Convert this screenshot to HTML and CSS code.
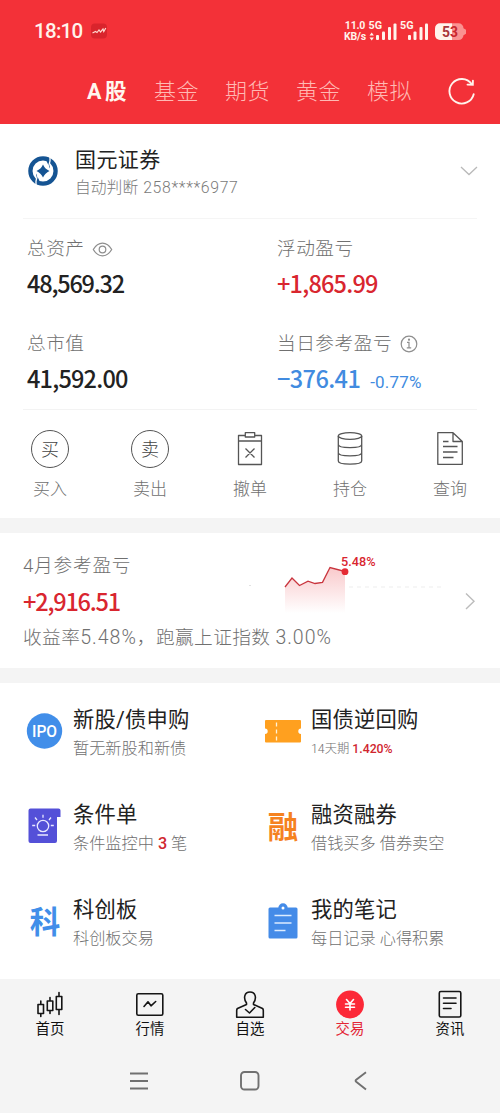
FILE: index.html
```html
<!DOCTYPE html>
<html lang="zh-CN">
<head>
<meta charset="utf-8">
<title>交易</title>
<link rel="stylesheet" href="styles.css">
</head>
<body>
<header class="header">
  <div class="status">
    <span class="clock">18:10</span>
    <svg class="app-dot" viewBox="90 22 18 18"><rect x="91" y="23.500" width="16" height="15" rx="4" fill="#d9242c"/><path d="M92.500 33l3-1.500 1.500 1 2-2.500 1.500 2 2.500-3 .8 2.500 2-3.500" fill="none" stroke="#ffd9d0" stroke-width="1.200"/></svg>
    <div class="net"><span>11.0</span><span>KB/s</span></div>
    <svg class="signals" viewBox="368 18 100 24">
      <g fill="#fff3ec">
        <path d="M371.700 31.500l2.200 3h-4.400zM371.700 39.500l2.200-3h-4.400z"/>
        <rect x="376" y="34" width="3" height="5" rx="1"/><rect x="382" y="30.500" width="3" height="8.500" rx="1"/><rect x="388" y="26" width="3" height="13" rx="1"/><rect x="393.500" y="22.500" width="3" height="16.500" rx="1"/>
        <rect x="408" y="34" width="3" height="5" rx="1"/><rect x="413.500" y="30.500" width="3" height="8.500" rx="1"/><rect x="419.500" y="26" width="3" height="13" rx="1"/><rect x="425" y="22.500" width="3" height="16.500" rx="1"/>
        <text class="gen" x="368.500" y="27.800" textLength="13.500" lengthAdjust="spacingAndGlyphs">5G</text>
        <text class="gen" x="400" y="27.800" textLength="13.500" lengthAdjust="spacingAndGlyphs">5G</text>
        <path d="M440 22.300h12v16.700h-12a5 5 0 0 1-5-5v-6.700a5 5 0 0 1 5-5z"/>
      </g>
      <path d="M452 22.300h6.500a5 5 0 0 1 5 5l2.500 1.500v4l-2.500 1.500a5 5 0 0 1-5 4.700h-6.500z" fill="#fa9291"/>
      <text class="batt" x="442" y="36" textLength="16" lengthAdjust="spacingAndGlyphs"><tspan fill="#a8353a">5</tspan><tspan fill="#c9262e">3</tspan></text>
    </svg>
  </div>
  <nav class="markets">
    <span class="market on">A股</span><span class="market">基金</span><span class="market">期货</span><span class="market">黄金</span><span class="market">模拟</span>
    <svg class="refresh" viewBox="446 76 30 30" fill="none" stroke="#fff3ec" stroke-width="1.900" stroke-linecap="round"><path d="M473.700 94.200a12.300 12.300 0 1 1-2-10.200"/><path d="M467.500 84.600l5.300.2.100-4"/></svg>
  </nav>
</header>

<section class="account">
  <svg class="broker-logo" viewBox="28 155 30 31">
    <circle cx="43" cy="171" r="12.600" fill="none" stroke="#155493" stroke-width="4.300"/>
    <path d="M46.500 161l3.500-2.500v10zM39.500 181l-3.500 2.500v-10z" fill="#155493"/>
    <path d="M50 155.500v5.500l-1.500 6M36 186.500v-5.500l1.500-6" fill="none" stroke="#fff" stroke-width="1.300"/>
    <path d="M43 164.500q2 4.500 6.500 6.500q-4.500 2-6.500 6.500q-2-4.500-6.500-6.500q4.500-2 6.500-6.500z" fill="#155493"/>
  </svg>
  <div class="broker">
    <div class="broker-name">国元证券</div>
    <div class="broker-no"><span>自动判断</span><span class="acct">258****6977</span></div>
  </div>
  <svg class="down" viewBox="459 163 20 16" fill="none" stroke="#b9b9b9" stroke-width="1.300"><path d="M461 167l8 7.500 8-7.500"/></svg>
</section>

<section class="stats">
  <div class="stat">
    <div class="label">总资产<svg class="eye" viewBox="91 240 21 18" fill="none" stroke="#8e8e8e" stroke-width="1.200"><path d="M92.300 249.500q3.700-6.300 9.200-6.300t9.200 6.300q-3.700 6.300-9.200 6.300t-9.200-6.300z"/><circle cx="101.500" cy="249.500" r="3.300"/></svg></div>
    <div class="value tight">48,569.32</div>
  </div>
  <div class="stat">
    <div class="label">浮动盈亏</div>
    <div class="value up">+1,865.99</div>
  </div>
  <div class="stat">
    <div class="label">总市值</div>
    <div class="value">41,592.00</div>
  </div>
  <div class="stat">
    <div class="label">当日参考盈亏<svg class="info" viewBox="400 334 20 20" fill="none" stroke="#8e8e8e" stroke-width="1.200"><circle cx="410" cy="344" r="7.800"/><path d="M408 342.300h2v5.500m-2.200 0h4.400"/><circle cx="410" cy="339.700" r=".5" fill="#8e8e8e"/></svg></div>
    <div class="value down-c">−376.41<span class="pct">-0.77%</span></div>
  </div>
</section>

<section class="actions">
  <div class="action"><div class="ring">买</div><span>买入</span></div>
  <div class="action"><div class="ring">卖</div><span>卖出</span></div>
  <div class="action"><svg class="act-ico" viewBox="230 429 40 40"><path d="M245 435.500h-6.500v29h23v-29H255M238.500 441h23M245.300 432.700h9.400v4.300h-9.400zM245.500 448.500l9 9m0-9l-9 9"/></svg><span>撤单</span></div>
  <div class="action"><svg class="act-ico" viewBox="330 429 40 40"><ellipse cx="350" cy="436" rx="11.700" ry="3.300"/><path d="M338.300 436v25c0 4.200 23.400 4.200 23.400 0v-25M338.300 444.500c0 4.200 23.400 4.200 23.400 0M338.300 452.700c0 4.200 23.400 4.200 23.400 0"/></svg><span>持仓</span></div>
  <div class="action"><svg class="act-ico" viewBox="430 429 40 40"><path d="M453 432.700h-15.200v31.600h24.500V441.500zM453 432.700v8.800h9.300M443 441.500h5.500M443 446.500h14.500M443 452h14.500M443 457.500h10.500"/></svg><span>查询</span></div>
</section>

<section class="month">
  <div class="month-text">
    <div class="label">4月参考盈亏</div>
    <div class="value up tight">+2,916.51</div>
    <div class="summary">收益率<span class="num">5.48%</span>，跑赢上证指数 <span class="num">3.00%</span></div>
  </div>
  <svg class="spark" viewBox="245 545 205 75">
    <defs><linearGradient id="fade" x1="0" y1="0" x2="0" y2="1"><stop offset="0" stop-color="#f9c9cb"/><stop offset="1" stop-color="#fff"/></linearGradient></defs>
    <path d="M285 587L292 578L299.500 585.500L308 581.200L315 583.500L322.500 582.300L330 567.500L345 571.500V613H285z" fill="url(#fade)"/>
    <path d="M285 587L292 578L299.500 585.500L308 581.200L315 583.500L322.500 582.300L330 567.500L345 571.500" fill="none" stroke="#c9353e" stroke-width="1.300"/>
    <path d="M349 587H445" stroke="#ededed" stroke-dasharray="4 4"/>
    <path d="M249 585.500h2" stroke="#e2e2e2"/>
    <circle cx="345" cy="571.700" r="3.400" fill="#e52a33"/>
    <text class="spark-pct" x="341" y="566.300" textLength="34.500" lengthAdjust="spacingAndGlyphs">5.48%</text>
  </svg>
  <svg class="next" viewBox="462 590 16 22" fill="none" stroke="#bcbcbc" stroke-width="1.400"><path d="M466 593.500l8 7.700-8 7.700"/></svg>
</section>

<section class="services">
  <div class="service">
    <svg class="svc-ico" viewBox="26 712 38 38"><circle cx="44.500" cy="731" r="17.700" fill="#418ee9"/><text class="ipo" x="32" y="737" textLength="25" lengthAdjust="spacingAndGlyphs">IPO</text></svg>
    <div><div class="title">新股/债申购</div><div class="sub">暂无新股和新债</div></div>
  </div>
  <div class="service">
    <svg class="svc-ico" viewBox="264 712 38 38"><path d="M266 720h34a1 1 0 0 1 1 1v7.500a2.700 2.700 0 0 0 0 5.400v7.600a1 1 0 0 1-1 1h-34a1 1 0 0 1-1-1v-7.600a2.700 2.700 0 0 0 0-5.400V721a1 1 0 0 1 1-1z" fill="#ffa01f"/><path d="M276.500 722.500v19" stroke="#fff3d8" stroke-width="1.300" stroke-dasharray="4 3"/></svg>
    <div><div class="title">国债逆回购</div><div class="sub small">14天期 <b>1.420%</b></div></div>
  </div>
  <div class="service">
    <svg class="svc-ico" viewBox="26 807 38 38"><path d="M30.500 808.500h28a2 2 0 0 1 2 2v6.500h-3.500v24a2 2 0 0 1-2 2h-24.500a2 2 0 0 1-2-2v-30.500a2 2 0 0 1 2-2z" fill="#5450d8"/><g fill="none" stroke="#e9e8ff" stroke-width="1.300"><circle cx="43" cy="826" r="5.700"/><path d="M43 814.800v3M35 817.500l2 2.500M51 817.500l-2 2.500M32.200 825.500h3M50.800 825.500h3M37.500 835h10.500"/></g></svg>
    <div><div class="title">条件单</div><div class="sub">条件监控中 <b>3</b> 笔</div></div>
  </div>
  <div class="service">
    <div class="svc-char orange">融</div>
    <div><div class="title">融资融券</div><div class="sub">借钱买多 借券卖空</div></div>
  </div>
  <div class="service">
    <div class="svc-char blue">科</div>
    <div><div class="title">科创板</div><div class="sub">科创板交易</div></div>
  </div>
  <div class="service">
    <svg class="svc-ico" viewBox="264 902 38 38"><rect x="268.500" y="907.500" width="29" height="31" rx="1.500" fill="#448be8"/><circle cx="283" cy="908" r="4.700" fill="#448be8"/><circle cx="283" cy="908" r="1.500" fill="#fff"/><path d="M274.500 915.500h17M274.500 923h17M274.500 930.500h11" stroke="#dcecff" stroke-width="1.400"/></svg>
    <div><div class="title">我的笔记</div><div class="sub">每日记录 心得积累</div></div>
  </div>
</section>

<footer class="footer">
  <nav class="tabs">
    <div class="tab"><svg class="tab-ico" viewBox="35 990 30 30"><path d="M38 1004.500h5.500v9h-5.500zM40.800 1001v3.500m0 9v3M47.300 1001h5.500v9.500h-5.500zM50 997.500v3.500m0 9.500v3M56.300 996.500h5.500v13h-5.500zM59 992.500v4m0 13v5"/></svg>首页</div>
    <div class="tab"><svg class="tab-ico" viewBox="135 990 30 30"><rect x="136.800" y="993.800" width="26" height="21.500" rx="1.500"/><path d="M144 1006.500l4-4.700 3 4 4.700-4.300"/></svg>行情</div>
    <div class="tab"><svg class="tab-ico" viewBox="235 990 30 30"><path d="M246.500 1003c-3.500-5-2-11 3.500-11s7 6 3.500 11v1.500l9 4c.7.500.8 1 .8 2v6.700h-26.600v-6.700c0-1 .1-1.500.8-2l9-4zM245.500 1009.500l4 3.500 5.300-5.500"/></svg>自选</div>
    <div class="tab on"><svg class="tab-ico" viewBox="335 990 30 30"><circle cx="350" cy="1004.500" r="13.900" fill="#fc2837" stroke="none"/><path d="M346.500 999.500l3.500 4 3.500-4M350 1003.500v6.500M345.500 1004h9M345.500 1007.200h9" stroke="#fff"/></svg>交易</div>
    <div class="tab"><svg class="tab-ico" viewBox="435 990 30 30"><rect x="439.300" y="991.500" width="21.500" height="25.500" rx="1.500"/><path d="M443.500 998h12.500M443.500 1003.300h12.500M443.500 1008.500h7.500"/></svg>资讯</div>
  </nav>
  <svg class="sysnav" viewBox="0 1060 500 42" fill="none" stroke="#707070" stroke-width="1.900"><path d="M130 1073.500h18M130 1081h18M130 1088.500h18"/><rect x="241" y="1072" width="17.500" height="17.500" rx="3.500"/><path d="M366 1072.300l-9.800 7.500q-1.200 1 0 2l9.800 7.700"/></svg>
</footer>
</body>
</html>
```
FILE: styles.css
```css
* { box-sizing: border-box; }
body {
  margin: 0;
  width: 500px;
  height: 1113px;
  overflow: hidden;
  background: #fff;
  color: #222;
  font-family: Roboto, "Noto Sans CJK SC", sans-serif;
  font-weight: 400;
}
svg { display: block; flex: none; }

.header { height: 124px; background: #f33138; color: #fff3ec; }
.status { display: flex; align-items: center; height: 62px; padding-left: 34px; }
.clock { width: 48px; font-size: 20.500px; font-weight: 500; line-height: 24px; letter-spacing: -.7px; white-space: nowrap; }
.app-dot { width: 18px; height: 18px; margin-left: 8px; }
.net { display: flex; flex-direction: column; width: 24px; margin-left: 235px; font-size: 10.500px; font-weight: 700; line-height: 11px; text-align: center; letter-spacing: -.2px; white-space: nowrap; }
.signals { width: 100px; height: 24px; margin-left: 1px; }
.gen { font-size: 11px; font-weight: 700; }
.batt { font-size: 15px; font-weight: 700; }
.markets { display: flex; align-items: center; height: 58px; padding-left: 87px; font-size: 22px; line-height: 30px; }
.market { width: 71px; padding-top: 2px; color: #ffb9b4; font-weight: 300; letter-spacing: .5px; white-space: nowrap; }
.market.on { width: 67px; color: #fff6ee; font-weight: 700; font-size: 21.500px; letter-spacing: 3.500px; }
.refresh { width: 30px; height: 30px; margin-left: 8px; }

.account { display: flex; align-items: flex-start; height: 95px; margin: 0 23px; padding: 20px 0 0 5px; border-bottom: 1px solid #f5f5f5; }
.broker-logo { width: 30px; height: 31px; margin-top: 11px; }
.broker { flex: 1; margin-left: 17px; padding-top: 1px; }
.broker-name { font-size: 21px; line-height: 30px; letter-spacing: .4px; }
.broker-no { display: flex; gap: 5px; color: #7a7a7a; font-size: 15.800px; font-weight: 300; line-height: 26px; }
.acct { letter-spacing: .65px; }
.down { width: 20px; height: 16px; margin: 19px -2px 0 0; }

.stats { display: grid; grid-template-columns: 250px 1fr; grid-auto-rows: 95px; height: 191px; margin: 0 23px; padding-left: 4px; border-bottom: 1px solid #f3f3f3; }
.stat { padding-top: 17px; white-space: nowrap; }
.label { display: flex; align-items: center; height: 26px; color: #707070; font-size: 18.700px; font-weight: 300; line-height: 26px; letter-spacing: .5px; }
.eye { width: 21px; height: 18px; margin: 0 0 0 7px; }
.info { width: 20px; height: 20px; margin: 0 0 0 7px; }
.value { margin-top: 5px; font-family: "Noto Sans CJK SC", sans-serif; font-size: 23.500px; font-weight: 500; line-height: 32px; letter-spacing: -.8px; }
.value.tight { letter-spacing: -1.200px; }
.up { color: #d9262f; }
.down-c { color: #418be0; letter-spacing: -.6px; }
.pct { margin-left: 10px; font-family: Roboto, sans-serif; font-size: 17px; font-weight: 400; letter-spacing: .2px; }

.actions { display: grid; grid-template-columns: repeat(5, 100px); height: 108px; padding-top: 19px; }
.action { display: flex; flex-direction: column; align-items: center; color: #707070; font-size: 17px; font-weight: 300; line-height: 24px; gap: 8px; }
.ring { width: 38px; height: 38px; margin: 1px 0; border: 1.300px solid #555; border-radius: 50%; color: #444; font-size: 18px; line-height: 37px; text-align: center; }
.act-ico { width: 40px; height: 40px; fill: none; stroke: #555; stroke-width: 1.300; stroke-linejoin: round; }

.month { display: flex; height: 165px; padding: 32px 0 0 23px; border: solid #f4f4f4; border-width: 15px 0; }
.month-text { width: 222px; white-space: nowrap; margin-top: -12px; }
.month-text .value { margin-top: 6px; }
.month-text .label { letter-spacing: .75px; }
.summary { margin-top: 8px; color: #707070; font-size: 18.700px; font-weight: 300; line-height: 26px; letter-spacing: .4px; }
.num { font-size: 19.500px; letter-spacing: 1px; }
.spark { width: 205px; height: 75px; margin-top: -20px; }
.spark-pct { fill: #d9262f; font-size: 13px; font-weight: 500; }
.next { width: 16px; height: 22px; margin: 25px 0 0 12px; }

.services { display: grid; grid-template-columns: 238px 1fr; grid-auto-rows: 95px; height: 296px; padding-left: 26px; overflow: hidden; }
.service { display: flex; padding-top: 22px; white-space: nowrap; }
.svc-ico { width: 38px; height: 38px; margin: 7px 9px 0 0; }
.svc-char { width: 38px; margin: 9px 9px 0 0; font-size: 30.500px; font-weight: 700; line-height: 38px; text-align: center; }
.ipo { fill: #fff; font-size: 16.500px; font-weight: 500; }
.orange { color: #f5821f; }
.blue { color: #418ee9; }
.title { font-size: 21.300px; line-height: 30px; letter-spacing: .2px; }
.sub { color: #707070; font-size: 16.200px; font-weight: 300; line-height: 28px; }
.sub.small { font-size: 12.300px; }
.sub b { color: #d0262f; font-weight: 500; }

.footer { height: 134px; background: #f4f4f4; }
.tabs { display: grid; grid-template-columns: repeat(5, 100px); padding-top: 11px; height: 81px; }
.tab { display: flex; flex-direction: column; align-items: center; font-size: 14.400px; line-height: 20px; color: #111; }
.tab.on { color: #e32636; }
.tab-ico { width: 30px; height: 30px; fill: none; stroke: #151515; stroke-width: 1.600; stroke-linejoin: round; stroke-linecap: round; }
.sysnav { width: 500px; height: 42px; }
```
